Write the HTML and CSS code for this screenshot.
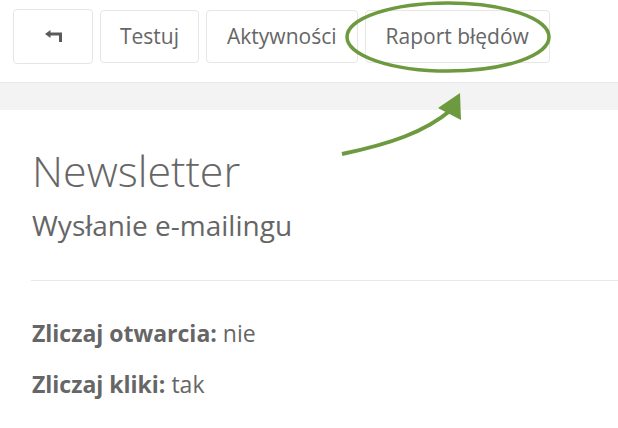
FILE: index.html
```html
<!DOCTYPE html>
<html lang="pl">
<head>
    <meta charset="UTF-8">
    <title>Newsletter</title>
    <link rel="stylesheet" href="styles.css">
</head>
<body>
    <div class="toolbar">
        <button type="button" class="btn btn-back" aria-label="Wstecz">
            <svg width="17" height="12" viewBox="0 0 17 12">
                <path d="M0 4 L5.5 0 L5.5 2.5 L17 2.5 L17 12 L14 12 L14 5.5 L5.5 5.5 L5.5 8 Z" fill="#5a5a5a"/>
            </svg>
        </button>
        <button type="button" class="btn">Testuj</button>
        <button type="button" class="btn btn-wide">Aktywności</button>
        <button type="button" class="btn btn-wide">Raport błędów</button>
    </div>
    <div class="band"></div>

    <div class="content">
        <h1>Newsletter</h1>
        <h2>Wysłanie e-mailingu</h2>
        <hr>
        <p><strong>Zliczaj otwarcia:</strong> nie</p>
        <p><strong>Zliczaj kliki:</strong> tak</p>
    </div>

    <!-- annotation drawn over the page -->
    <svg class="annotation" width="618" height="170" viewBox="0 0 618 170">
        <ellipse cx="448" cy="37" rx="101" ry="34" fill="none" stroke="#6e9a3f" stroke-width="3.5"/>
        <path d="M342 154 C 390 144, 425 132, 451 110" fill="none" stroke="#6e9a3f" stroke-width="4"/>
        <path d="M460 93 L438 108 L461 120 Z" fill="#6e9a3f"/>
    </svg>
</body>
</html>
```

FILE: styles.css
```css
body {
    font-family: 'Open Sans', 'Noto Sans', Arial, sans-serif;
    color: #666;
    background-color: #fff;
    margin: 0;
    padding: 0;
    position: relative;
    overflow: hidden;
}

.toolbar {
    display: flex;
    align-items: center;
    gap: 7px;
    padding: 8px 13px 0;
    height: 56px;
    margin-bottom: 18px;
}

.btn {
    height: 53px;
    padding: 0 19px;
    background-color: #fff;
    border: 1px solid #e6e6e6;
    border-radius: 4px;
    font-family: inherit;
    font-size: 21px;
    color: #666;
    cursor: pointer;
}

.btn-back {
    width: 80px;
    height: 55px;
    display: flex;
    align-items: center;
    justify-content: center;
    padding: 0;
}

.btn-wide {
    padding: 0 20px;
}

.band {
    height: 27px;
    background-color: #f3f3f3;
    border-top: 1px solid #e8e8e8;
}

.content {
    padding: 0 0 0 32px;
}

h1 {
    font-size: 43px;
    font-weight: 300;
    margin: 35px 0 0;
    line-height: 1.2;
}

h2 {
    font-size: 28px;
    font-weight: 400;
    margin: 10px 0 0;
    line-height: 1.3;
}

hr {
    border: none;
    border-top: 1px solid #e8e8e8;
    margin: 37px 0 38px -1px;
}

p {
    font-size: 23px;
    margin: 0 0 23px;
    line-height: 28px;
}

strong {
    font-weight: 700;
}

.annotation {
    position: absolute;
    left: 0;
    top: 0;
    pointer-events: none;
}
```
